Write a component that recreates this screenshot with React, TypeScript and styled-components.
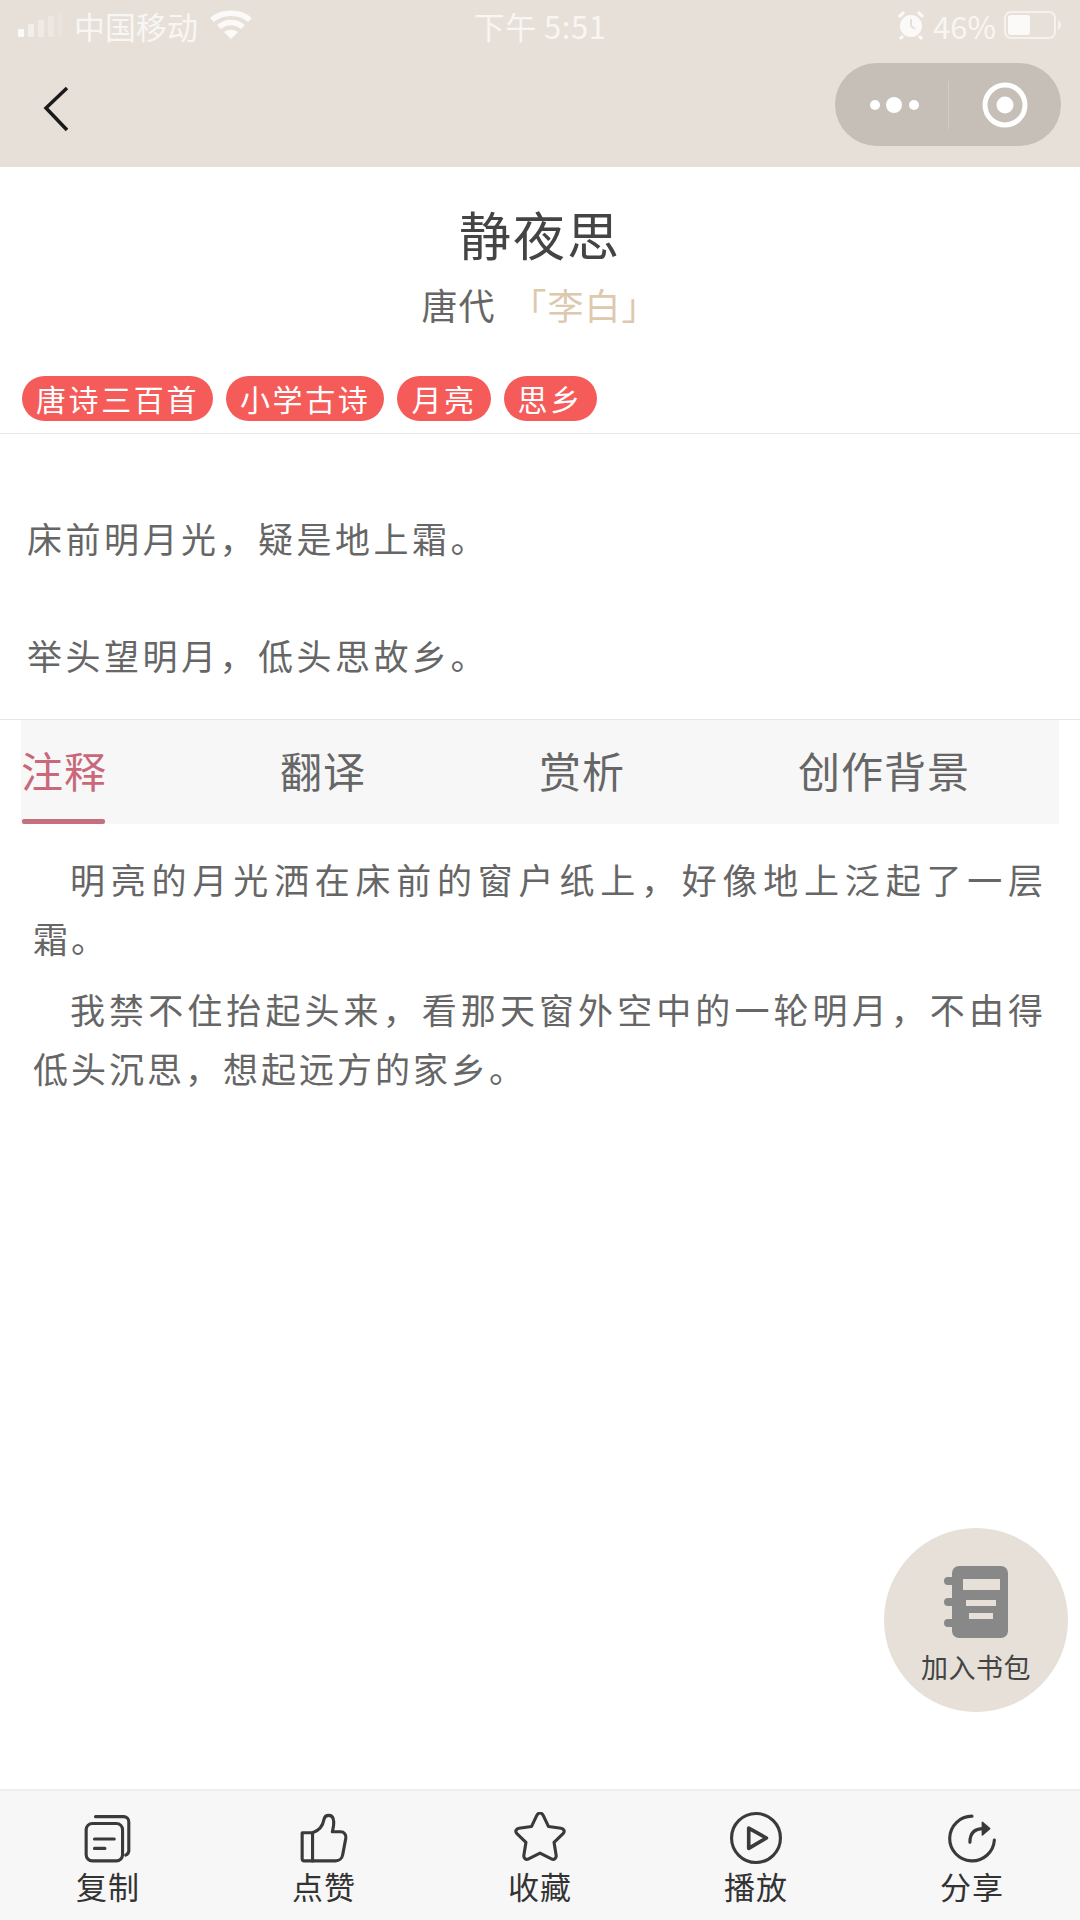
import { createGlobalStyle, styled } from 'styled-components';

const GlobalStyle = createGlobalStyle`
  html, body {
    margin: 0;
    padding: 0;
    background: #fff;
    font-family: "Noto Sans CJK SC", "Liberation Sans", sans-serif;
  }
`;

const Page = styled.div`
  position: relative;
  width: 1080px;
  height: 1920px;
  display: flex;
  flex-direction: column;
  overflow: hidden;
  background: #fff;
`;

const Header = styled.header`
  height: 167px;
  flex: none;
  display: flex;
  flex-direction: column;
  background: #e7e0d8;
`;

const StatusBar = styled.div`
  height: 54px;
  display: grid;
  grid-template-columns: 1fr auto 1fr;
  align-items: center;
  padding: 0 18px 4px;
  box-sizing: border-box;
  color: #f8f6f3;
  font-size: 31px;
`;

const StatusLeft = styled.div`
  display: flex;
  align-items: center;
  gap: 12px;
`;

const StatusRight = styled.div`
  display: flex;
  align-items: center;
  justify-content: flex-end;
  gap: 8px;
`;

const Time = styled.div`
  font-size: 31px;
  letter-spacing: 0.5px;
`;

const NavBar = styled.div`
  flex: 1;
  display: flex;
  align-items: center;
  justify-content: space-between;
  padding: 0 19px 12px 42px;
`;

const BackIcon = styled.svg`
  margin-top: 8px;
`;

const Capsule = styled.div`
  width: 226px;
  height: 83px;
  border-radius: 42px;
  background: #c6bfb7;
  display: grid;
  grid-template-columns: 113px 1px 112px;
  align-items: center;
  justify-items: center;
`;

const DotsIcon = styled.svg`
  margin-left: 6px;
`;

const CapsuleLine = styled.div`
  width: 1px;
  height: 48px;
  background: #d2ccc5;
`;

const TitleBlock = styled.section`
  padding-top: 36px;
  text-align: center;
`;

const Title = styled.h1`
  margin: 0;
  font-size: 52px;
  line-height: 62px;
  font-weight: 400;
  color: #444;
  letter-spacing: 2px;
`;

const Subtitle = styled.div`
  margin-top: 12px;
  font-size: 36px;
  line-height: 54px;
  color: #666;
  letter-spacing: 1px;
`;

const Author = styled.span`
  margin-left: 6px;
  color: #dcc9ae;
`;

const TagRow = styled.div`
  margin-top: 45px;
  height: 45px;
  padding: 0 22px 12px;
  display: flex;
  gap: 13px;
  border-bottom: 1px solid #e6e6e6;
`;

const Tag = styled.span`
  height: 45px;
  padding: 0 14px;
  border-radius: 23px;
  background: #f55b59;
  color: #fff;
  font-size: 30px;
  line-height: 44px;
  letter-spacing: 2.6px;
`;

const Poem = styled.section`
  padding: 75px 27px 0;
  height: 286px;
  box-sizing: border-box;
  border-bottom: 1px solid #e6e6e6;
`;

const PoemLine = styled.p`
  margin: 0 0 60px;
  font-size: 35px;
  line-height: 57px;
  color: #666;
  letter-spacing: 3.500px;
`;

const TabRow = styled.nav`
  margin: 0 21px;
  height: 104px;
  flex: none;
  display: flex;
  gap: 173px;
  align-items: center;
  padding: 0 0 4px;
  box-sizing: border-box;
  background: #f7f7f7;
`;

const TabItem = styled.div<{ $active?: boolean }>`
  position: relative;
  font-size: 42px;
  line-height: 60px;
  letter-spacing: 1px;
  color: ${(p) => (p.$active ? '#c9687a' : '#666')};

  &::after {
    content: '';
    display: ${(p) => (p.$active ? 'block' : 'none')};
    position: absolute;
    left: 1px;
    bottom: -24px;
    width: 83px;
    height: 5px;
    border-radius: 2px;
    background: #c4707f;
  }
`;

const Content = styled.section`
  flex: 1;
  padding: 25px 34px 0 33px;
`;

const Paragraph = styled.p`
  margin: 0 0 12px;
  font-size: 35px;
  line-height: 59px;
  color: #666;
  letter-spacing: 3px;
  text-indent: 37px;
  text-align: justify;
`;

const BookButton = styled.div`
  position: absolute;
  left: 884px;
  top: 1528px;
  width: 184px;
  height: 184px;
  border-radius: 50%;
  background: #e6e0d8;
  display: flex;
  flex-direction: column;
  align-items: center;
  padding-top: 37px;
  box-sizing: border-box;
`;

const BookLabel = styled.div`
  margin-top: 10px;
  font-size: 27px;
  line-height: 36px;
  letter-spacing: 0.5px;
  color: #444;
`;

const BottomBar = styled.footer`
  height: 131px;
  flex: none;
  display: grid;
  grid-template-columns: repeat(5, 1fr);
  box-sizing: border-box;
  padding-top: 21px;
  background: #f7f7f7;
  border-top: 2px solid #eeeeee;
`;

const BarItem = styled.div`
  display: flex;
  flex-direction: column;
  align-items: center;
  gap: 2px;
`;

const BarLabel = styled.div`
  font-size: 31px;
  line-height: 40px;
  letter-spacing: 1px;
  color: #333;
`;

const BarIcon = styled.svg`
  width: 52px;
  height: 52px;
  fill: none;
  stroke: #3a3a3a;
  stroke-width: 3;
  stroke-linecap: round;
  stroke-linejoin: round;
`;

const tabs = ['注释', '翻译', '赏析', '创作背景'];
const tags = ['唐诗三百首', '小学古诗', '月亮', '思乡'];

const barItems = [
  {
    label: '复制',
    icon: (
      <>
        <rect x="4" y="11" width="35" height="36" rx="6" />
        <path d="M13 4.500h27a5 5 0 0 1 5 5v28a5 5 0 0 1-3 4" />
        <path d="M12 26h19M12 35h10" />
      </>
    ),
  },
  {
    label: '点赞',
    icon: (
      <>
        <path d="M4 20h10v27H6a2 2 0 0 1-2-2z" />
        <path d="M14 20c6-2 10-7 11-13 1-5 8-5 9 0 1 4 0 8-1 12h8a5 5 0 0 1 5 6l-3 16a7 7 0 0 1-7 6H14" />
      </>
    ),
  },
  {
    label: '收藏',
    icon: (
      <path d="M25 1c1.500 0 2.500 1 3.200 2.500l5 10.500 12 1.700c3 .5 4 3 2 5l-8.700 8.500 2 12.300c.5 3-2 5-4.500 3.500L25 39.500l-11 5.500c-2.500 1.500-5 -.5-4.500-3.500l2-12.300-8.700-8.500c-2-2-1-4.500 2-5l12-1.700 5-10.500C22.500 2 23.500 1 25 1z" />
    ),
  },
  {
    label: '播放',
    icon: (
      <>
        <circle cx="25" cy="25" r="23.500" />
        <path d="M18 15.500v19.500L35 25z" strokeWidth="3.500" />
      </>
    ),
  },
  {
    label: '分享',
    icon: (
      <>
        <path d="M25 4a21.500 21.500 0 1 0 21.500 23" />
        <path d="M23 29c0-8 4-13 13-13" />
        <path d="M35 10l7 6-7 6z" fill="#3a3a3a" strokeWidth="1.500" />
      </>
    ),
  },
];

function App() {
  return (
    <Page>
      <GlobalStyle />
      <Header>
        <StatusBar>
          <StatusLeft>
            <svg width="44" height="26" viewBox="0 0 44 26">
              <rect x="0" y="17" width="6" height="8" rx="1" fill="#fbfaf8" />
              <rect x="10" y="12" width="6" height="13" rx="1" fill="#fbfaf8" fillOpacity="0.55" />
              <rect x="20" y="8" width="6" height="17" rx="1" fill="#fbfaf8" fillOpacity="0.4" />
              <rect x="30" y="4" width="6" height="21" rx="1" fill="#fbfaf8" fillOpacity="0.25" />
              <rect x="40" y="0" width="4" height="25" rx="1" fill="#fbfaf8" fillOpacity="0.15" />
            </svg>
            <span>中国移动</span>
            <svg width="42" height="30" viewBox="0 0 42 30">
              <path d="M2 10C12 1 30 1 40 10" fill="none" stroke="#fbfaf8" strokeWidth="5.500" />
              <path d="M9 17c7-6 17-6 24 0" fill="none" stroke="#fbfaf8" strokeWidth="5.500" />
              <path d="M14 22c4-3 10-3 14 0l-7 7z" fill="#fbfaf8" />
            </svg>
          </StatusLeft>
          <Time>下午 5:51</Time>
          <StatusRight>
            <svg width="28" height="30" viewBox="0 0 28 30">
              <circle cx="14" cy="16" r="11" fill="#fbfaf8" />
              <path d="M14 9v7l4 3" fill="none" stroke="#e7e0d8" strokeWidth="2" />
              <path d="M2 7l5-5M26 7l-5-5M6 26l-3 3M22 26l3 3" stroke="#fbfaf8" strokeWidth="3" />
            </svg>
            <span>46%</span>
            <svg width="58" height="28" viewBox="0 0 58 28">
              <rect x="1" y="1" width="50" height="26" rx="6" fill="none" stroke="#fbfaf8" strokeOpacity="0.7" strokeWidth="2" />
              <rect x="4" y="4" width="22" height="20" rx="3" fill="#fbfaf8" />
              <path d="M54 9c2 1 3 3 3 5s-1 4-3 5z" fill="#fbfaf8" fillOpacity="0.7" />
            </svg>
          </StatusRight>
        </StatusBar>
        <NavBar>
          <BackIcon width="28" height="46" viewBox="0 0 28 46">
            <path d="M25 2L4 22l21 22" fill="none" stroke="#1a1a1a" strokeWidth="3.500" />
          </BackIcon>
          <Capsule>
            <DotsIcon width="50" height="16" viewBox="0 0 50 16">
              <circle cx="5" cy="8" r="5" fill="#fff" />
              <circle cx="24" cy="8" r="8" fill="#fff" />
              <circle cx="44" cy="8" r="5" fill="#fff" />
            </DotsIcon>
            <CapsuleLine />
            <svg width="48" height="48" viewBox="0 0 48 48">
              <circle cx="24" cy="24" r="20" fill="none" stroke="#fff" strokeWidth="5" />
              <circle cx="24" cy="24" r="8.500" fill="#fff" />
            </svg>
          </Capsule>
        </NavBar>
      </Header>

      <TitleBlock>
        <Title>静夜思</Title>
        <Subtitle>
          唐代 <Author>「李白」</Author>
        </Subtitle>
      </TitleBlock>

      <TagRow>
        {tags.map((tag) => (
          <Tag key={tag}>{tag}</Tag>
        ))}
      </TagRow>

      <Poem>
        <PoemLine>床前明月光，疑是地上霜。</PoemLine>
        <PoemLine>举头望明月，低头思故乡。</PoemLine>
      </Poem>

      <TabRow>
        {tabs.map((tab, i) => (
          <TabItem key={tab} $active={i === 0}>
            {tab}
          </TabItem>
        ))}
      </TabRow>

      <Content>
        <Paragraph>明亮的月光洒在床前的窗户纸上，好像地上泛起了一层霜。</Paragraph>
        <Paragraph>我禁不住抬起头来，看那天窗外空中的一轮明月，不由得低头沉思，想起远方的家乡。</Paragraph>
      </Content>

      <BookButton>
        <svg width="66" height="74" viewBox="0 0 66 74">
          <rect x="9" y="1" width="56" height="72" rx="7" fill="#888" />
          <rect x="1" y="12" width="14" height="8" rx="4" fill="#888" />
          <rect x="1" y="33" width="14" height="8" rx="4" fill="#888" />
          <rect x="1" y="54" width="14" height="8" rx="4" fill="#888" />
          <rect x="20" y="14" width="37" height="11" fill="#e6e0d8" />
          <rect x="23" y="35" width="30" height="6" fill="#e6e0d8" />
          <rect x="26" y="48" width="24" height="6" fill="#e6e0d8" />
        </svg>
        <BookLabel>加入书包</BookLabel>
      </BookButton>

      <BottomBar>
        {barItems.map((item) => (
          <BarItem key={item.label}>
            <BarIcon viewBox="0 0 50 50">{item.icon}</BarIcon>
            <BarLabel>{item.label}</BarLabel>
          </BarItem>
        ))}
      </BottomBar>
    </Page>
  );
}

export default App;
